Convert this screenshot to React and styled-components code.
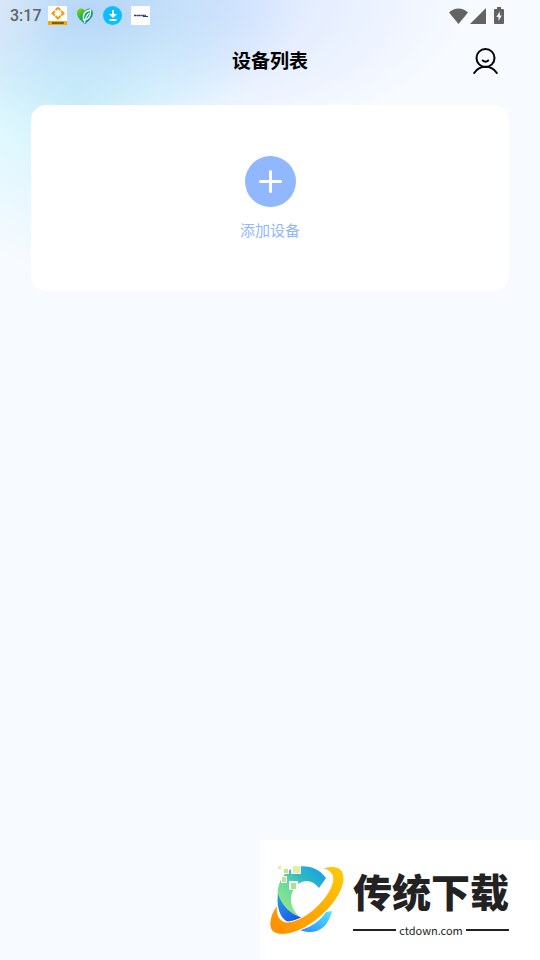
import React from "react"
import styled, { createGlobalStyle } from "styled-components"

//STYLES
const theme = {
  color: {
    background: "#f7faff",
    base: "#91b8ff",
    text: "#000000",
    status: "#5f6368",
    brand: "#222222",
  },
  font: `"Noto Sans CJK SC", "Noto Sans", sans-serif`,
}

const GlobalStyle = createGlobalStyle`
  * {
    box-sizing: border-box;
  }

  body {
    margin: 0;
    background-color: ${theme.color.background};
    font-family: ${theme.font};
  }

  button {
    border: none;
    padding: 0;
    font-family: inherit;
    cursor: pointer;
  }

  svg {
    display: block;
  }
`

const Page = styled.div`
  display: flex;
  flex-direction: column;
  min-height: 100vh;
  background-color: ${theme.color.background};
  background-image:
    radial-gradient(ellipse 60px 90px at 0 0, rgba(222, 232, 248, 0.7), rgba(222, 232, 248, 0) 100%),
    radial-gradient(ellipse 210px 110px at 90px 12px, rgba(180, 211, 246, 0.9), rgba(190, 220, 247, 0.5) 50%, rgba(200, 230, 250, 0) 100%),
    radial-gradient(ellipse 170px 180px at 75px 90px, rgba(198, 239, 250, 0.9), rgba(212, 246, 253, 0.65) 50%, rgba(232, 251, 255, 0) 100%),
    radial-gradient(ellipse 330px 150px at 140px 0, rgba(195, 215, 255, 0.9), rgba(215, 228, 255, 0.6) 50%, rgba(242, 246, 255, 0) 100%);
  background-repeat: no-repeat;
`

const StatusBar = styled.div`
  display: flex;
  justify-content: space-between;
  align-items: center;
  height: 31px;
  padding: 0 36px 0 10px;
`

const StatusGroup = styled.div`
  display: flex;
  align-items: center;
  gap: ${({ $gap }) => $gap}px;
`

const Time = styled.span`
  width: 29px;
  color: ${theme.color.status};
  font-family: Roboto, sans-serif;
  font-size: 16px;
  font-weight: 500;
  line-height: 20px;
  white-space: nowrap;
`

// Pasek z tytułem
const Header = styled.header`
  display: grid;
  grid-template-columns: 1fr auto 1fr;
  align-items: center;
  height: 60px;
  padding: 0 41px;

  h1 {
    grid-column: 2;
    margin: 0;
    padding-bottom: 2px;
    color: ${theme.color.text};
    font-size: 19px;
    font-weight: 700;
    line-height: 28px;
  }
`

const ProfileButton = styled.button`
  justify-self: end;
  background: none;
`

// Karta dodawania urządzenia
const Devices = styled.main`
  padding: 14px 31px;
`

const AddDevice = styled.button`
  display: flex;
  flex-direction: column;
  align-items: center;
  gap: 11px;
  width: 100%;
  padding: 51px 0 50px;
  border-radius: 15px;
  background-color: #ffffff;
  color: ${theme.color.base};
  font-size: 15px;
  line-height: 23px;
`

// Logo w stopce
const Brand = styled.footer`
  display: flex;
  align-items: center;
  align-self: flex-end;
  gap: 7px;
  width: 280px;
  height: 120px;
  margin-top: auto;
  padding-left: 8px;
  background-color: #ffffff;
`

const BrandText = styled.div`
  display: flex;
  flex-direction: column;
  gap: 4px;
  width: 156px;
  color: ${theme.color.brand};
`

const BrandName = styled.span`
  font-size: 39px;
  font-weight: 900;
  line-height: 56px;
  white-space: nowrap;
`

const BrandDomain = styled.span`
  display: flex;
  align-items: center;
  gap: 3px;
  font-family: "Noto Sans CJK SC", sans-serif;
  font-size: 11px;
  font-weight: 400;
  line-height: 16px;

  &::before,
  &::after {
    content: "";
    flex: 1;
    height: 2px;
    background-color: ${theme.color.brand};
  }
`

//ICONS
const FrameIcon = () => (
  <svg width="19" height="19" viewBox="0 0 19 19" aria-hidden="true">
    <path fill="#fff" d="M0 0h19v19H0z" />
    <path fill="#f6a800" d="M0 15h19v4H0z" />
    <g fill="none" stroke="#f39a13" strokeWidth="2">
      <path d="M7.500 4 10 2l2.500 2M13 5l2.500 2.500L13 9.500M12.500 10 10 12.500 7.500 10M7 9.500 4.500 7.500 7 5" />
    </g>
    <path stroke="#493b13" strokeWidth="1.500" strokeDasharray="2 .3 3 .3" d="M4 17h12" />
  </svg>
)

const LeafIcon = () => (
  <svg width="18" height="18" viewBox="0 0 18 18" aria-hidden="true">
    <defs>
      <linearGradient id="leaf" x1="0" y1="0" x2=".8" y2="1">
        <stop offset="0" stopColor="#91d900" />
        <stop offset=".5" stopColor="#16b35a" />
        <stop offset="1" stopColor="#0876cf" />
      </linearGradient>
    </defs>
    <path fill="url(#leaf)" d="M9 17C5 13.500 1 10.500 1 6c0-5 6-6 8-2 2-4 8-3 8 2 0 4.500-4 7.500-8 11z" />
    <path fill="#079d69" stroke="#fff" strokeWidth="1.300" d="M14.500 3C9 4 6.500 7 7.500 13c5-.5 7.500-4 7-10z" />
    <path fill="none" stroke="#fff" strokeWidth="1.200" d="M13 6c-3 3-4 6-4.500 10" />
  </svg>
)

const DownloadIcon = () => (
  <svg width="19" height="19" viewBox="0 0 19 19" aria-hidden="true">
    <circle cx="9.5" cy="9.5" r="9.5" fill="#08bfff" />
    <path stroke="#fff" strokeWidth="2" d="M10 4v5M6.500 14h7" />
    <path fill="#fff" d="M6 8h8l-4 4z" />
  </svg>
)

const LabelIcon = () => (
  <svg width="19" height="19" viewBox="0 0 19 19" aria-hidden="true">
    <path fill="#fff" d="M0 0h19v19H0z" />
    <path stroke="#263f74" strokeWidth="1.500" strokeDasharray="2 .3 1.500 .3" d="M3 9.500h12" />
    <path stroke="#263f74" d="M12 10.500h5" />
  </svg>
)

const WifiIcon = () => (
  <svg width="19" height="16" viewBox="0 0 19 16" aria-hidden="true">
    <path fill="#636363" d="M0 4.500C5.500-1 13.500-1 19 4.500L9.500 16z" />
  </svg>
)

const SignalIcon = () => (
  <svg width="16" height="16" viewBox="0 0 16 16" aria-hidden="true">
    <path fill="#636363" d="M16 0v16H0z" />
  </svg>
)

const BatteryIcon = () => (
  <svg width="10" height="17" viewBox="0 0 10 17" aria-hidden="true">
    <path fill="#636363" d="M3 0h4v2h2q1 0 1 1v13q0 1-1 1H1q-1 0-1-1V3q0-1 1-1h2z" />
    <path fill="#f7faff" d="M5.800 4.500v4h2L4.500 14v-4H2.300z" />
  </svg>
)

const ProfileIcon = () => (
  <svg width="26" height="28" viewBox="0 0 26 28" fill="none" stroke="#000" strokeWidth="2" strokeLinecap="round">
    <circle cx="12.5" cy="11" r="9" />
    <path d="M9.800 13.500q2.700 2.400 5.400 0M1.200 26C6.500 17.800 18.500 17.800 23.800 26" />
  </svg>
)

const PlusIcon = () => (
  <svg width="51" height="51" viewBox="0 0 51 51" aria-hidden="true">
    <circle cx="25.5" cy="25.5" r="25.5" fill={theme.color.base} />
    <path stroke="#fff" strokeWidth="3" strokeLinecap="round" d="M25.500 15.500v20M15.500 25.500h20" />
  </svg>
)

const BrandLogo = () => (
  <svg width="78" height="74" viewBox="0 0 78 74" aria-hidden="true">
    <defs>
      <linearGradient id="arc" x1="0" y1="1" x2="1" y2="0">
        <stop offset="0" stopColor="#a4ed82" />
        <stop offset=".4" stopColor="#6ddb9b" />
        <stop offset=".65" stopColor="#2db8c8" />
        <stop offset="1" stopColor="#109de4" />
      </linearGradient>
      <linearGradient id="shade" x1="0" y1="0" x2="1" y2="1">
        <stop offset="0" stopColor="#249eeb" />
        <stop offset="1" stopColor="#1b49e8" />
      </linearGradient>
      <linearGradient id="tail" x1="0" y1="1" x2="1" y2="0">
        <stop offset="0" stopColor="#268bff" />
        <stop offset="1" stopColor="#55e4ff" />
      </linearGradient>
      <linearGradient id="ring" x1="0" y1="1" x2="1" y2="0">
        <stop offset="0" stopColor="#ff8c00" />
        <stop offset="1" stopColor="#ffcb08" />
      </linearGradient>
    </defs>
    <path fill="url(#arc)" d="M58 15C50 4 37 1 25 5 14 10 8 23 10 35c2 12 12 21 24 21-14-11-14-26-4-35 7-5 15-4 21 4z" />
    <path fill="url(#shade)" d="M10 31c4 12 13 21 25 24l-12 5C13 58 8 45 10 31z" />
    <path fill="url(#tail)" d="M64 48C60 66 47 73 32 67c12-3 20-9 26-18z" />
    <path fill="url(#ring)" stroke="#fff" strokeWidth="1" d="M54 5.500C66 1 76 4 76 15c0 13-13 32-32 45C26 73 4 76 2 63 1 56 5 47 9.500 42c-1 9 1 16 9 17 15 0 36-17 44-34 4-9 4-17-8.500-19.500z" />
    <g stroke="#fff">
      <path fill="#e2efa0" d="M9.500 2.500h4v4h-4zM24.500 2.500h8v8h-8z" />
      <path fill="#bde78a" d="M15.500 5.500h5v5h-5zM13.500 13.500h5v6h-5z" />
      <path fill="#a7e48c" d="M22.500 19.500h6v7h-6z" />
      <path fill="none" d="M21.500 18.500h8v8h-8zM23.500 1.500h9v9h-9z" />
    </g>
  </svg>
)

export default function App() {
  return (
    <>
      <GlobalStyle />
      <Page>
        <StatusBar>
          <StatusGroup $gap={9}>
            <Time>3:17</Time>
            <FrameIcon />
            <LeafIcon />
            <DownloadIcon />
            <LabelIcon />
          </StatusGroup>
          <StatusGroup $gap={8}>
            <StatusGroup $gap={2}>
              <WifiIcon />
              <SignalIcon />
            </StatusGroup>
            <BatteryIcon />
          </StatusGroup>
        </StatusBar>
        <Header>
          <h1>设备列表</h1>
          <ProfileButton type="button" aria-label="个人中心">
            <ProfileIcon />
          </ProfileButton>
        </Header>
        <Devices>
          <AddDevice type="button">
            <PlusIcon />
            添加设备
          </AddDevice>
        </Devices>
        <Brand>
          <BrandLogo />
          <BrandText>
            <BrandName>传统下载</BrandName>
            <BrandDomain>ctdown.com</BrandDomain>
          </BrandText>
        </Brand>
      </Page>
    </>
  )
}
